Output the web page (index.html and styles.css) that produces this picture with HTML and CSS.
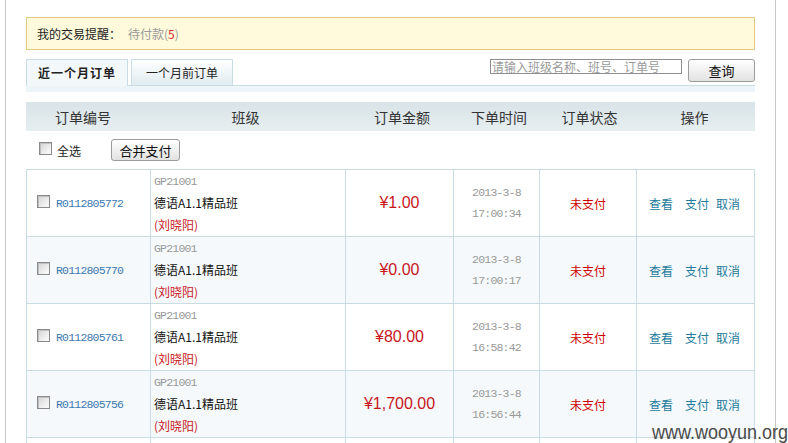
FILE: index.html
```html
<!DOCTYPE html>
<html lang="zh-CN">
<head>
    <meta charset="UTF-8">
    <title>我的订单</title>
    <link rel="stylesheet" href="styles.css">
</head>
<body>
    <div class="page">
        <div class="notice">
            <span class="notice-title">我的交易提醒：</span>
            <span class="notice-item">待付款(<em>5</em>)</span>
        </div>

        <div class="tabbar">
            <a class="tab tab-active">近一个月订单</a>
            <a class="tab">一个月前订单</a>
            <form class="search">
                <input type="text" class="search-input" placeholder="请输入班级名称、班号、订单号">
                <button type="button" class="btn btn-query">查询</button>
            </form>
        </div>
        <div class="tab-band"></div>

        <div class="list-head">
            <span>订单编号</span>
            <span>班级</span>
            <span>订单金额</span>
            <span>下单时间</span>
            <span>订单状态</span>
            <span>操作</span>
        </div>

        <div class="toolbar">
            <label class="check-all"><input type="checkbox" class="chk"> 全选</label>
            <button type="button" class="btn btn-merge">合并支付</button>
        </div>

        <div class="orders">
            <div class="order-row">
                <div class="cell cell-no"><input type="checkbox" class="chk"><a class="order-no mono">R0112805772</a></div>
                <div class="cell cell-class">
                    <span class="class-code mono">GP21001</span>
                    <span class="class-name">德语A1.1精品班</span>
                    <span class="teacher">(刘晓阳)</span>
                </div>
                <div class="cell cell-amount">¥1.00</div>
                <div class="cell cell-time mono"><span>2013-3-8</span><span>17:00:34</span></div>
                <div class="cell cell-status">未支付</div>
                <div class="cell cell-ops"><a class="op-view">查看</a><a class="op-pay">支付</a><a>取消</a></div>
            </div>
            <div class="order-row">
                <div class="cell cell-no"><input type="checkbox" class="chk"><a class="order-no mono">R0112805770</a></div>
                <div class="cell cell-class">
                    <span class="class-code mono">GP21001</span>
                    <span class="class-name">德语A1.1精品班</span>
                    <span class="teacher">(刘晓阳)</span>
                </div>
                <div class="cell cell-amount">¥0.00</div>
                <div class="cell cell-time mono"><span>2013-3-8</span><span>17:00:17</span></div>
                <div class="cell cell-status">未支付</div>
                <div class="cell cell-ops"><a class="op-view">查看</a><a class="op-pay">支付</a><a>取消</a></div>
            </div>
            <div class="order-row">
                <div class="cell cell-no"><input type="checkbox" class="chk"><a class="order-no mono">R0112805761</a></div>
                <div class="cell cell-class">
                    <span class="class-code mono">GP21001</span>
                    <span class="class-name">德语A1.1精品班</span>
                    <span class="teacher">(刘晓阳)</span>
                </div>
                <div class="cell cell-amount">¥80.00</div>
                <div class="cell cell-time mono"><span>2013-3-8</span><span>16:58:42</span></div>
                <div class="cell cell-status">未支付</div>
                <div class="cell cell-ops"><a class="op-view">查看</a><a class="op-pay">支付</a><a>取消</a></div>
            </div>
            <div class="order-row">
                <div class="cell cell-no"><input type="checkbox" class="chk"><a class="order-no mono">R0112805756</a></div>
                <div class="cell cell-class">
                    <span class="class-code mono">GP21001</span>
                    <span class="class-name">德语A1.1精品班</span>
                    <span class="teacher">(刘晓阳)</span>
                </div>
                <div class="cell cell-amount">¥1,700.00</div>
                <div class="cell cell-time mono"><span>2013-3-8</span><span>16:56:44</span></div>
                <div class="cell cell-status">未支付</div>
                <div class="cell cell-ops"><a class="op-view">查看</a><a class="op-pay">支付</a><a>取消</a></div>
            </div>
            <!-- next row, only its top edge shows in the window -->
            <div class="order-row">
                <div class="cell"></div>
                <div class="cell"></div>
                <div class="cell"></div>
                <div class="cell"></div>
                <div class="cell"></div>
                <div class="cell"></div>
            </div>
        </div>
    </div>

    <div class="watermark">www.wooyun.org</div>
</body>
</html>
```

FILE: styles.css
```css
:root {
    --line: #c9dbe3;
    --red: #c8161d;
    --link: #237a9c;
}
body {
    margin: 0;
    font-family: "Noto Sans CJK SC", sans-serif;
    font-size: 12px;
    color: #333;
    background: #fff;
}
a {
    cursor: pointer;
}
.mono {
    font-family: "Liberation Mono", monospace;
    font-size: 11.5px;
    letter-spacing: -0.8px;
}
.page {
    margin-left: 5px;
    width: 771px;
    height: 443px;
    overflow: hidden;
    padding: 17px 20px 0;
    box-sizing: border-box;
    border-left: 1px solid #c8c8c8;
    border-right: 1px solid #c8c8c8;
}

/* 交易提醒 */
.notice {
    height: 31px;
    display: flex;
    align-items: center;
    padding-left: 10px;
    border: 1px solid #e4ca7e;
    background: #fffadb;
    color: #222;
}
.notice-item {
    margin-left: 7px;
    color: #999;
}
.notice-item em {
    font-style: normal;
    color: #d42a2a;
}

/* 标签页 */
.tabbar {
    margin-top: 9px;
    height: 26px;
    display: flex;
    border-bottom: 1px solid var(--line);
}
.tab {
    width: 100px;
    height: 25px;
    line-height: 25px;
    text-align: center;
    border: 1px solid var(--line);
    border-bottom: 0;
    background: linear-gradient(#ffffff, #e1ebf0);
    color: #222;
}
.tab + .tab {
    margin-left: 3px;
}
.tab-active {
    height: 26px;
    background: #f3f8fa;
    font-weight: bold;
    letter-spacing: 1px;
}
.tab-band {
    height: 6px;
    background: #eef5f8;
}
.search {
    margin: 0 0 0 auto;
    display: flex;
    align-items: flex-start;
}
.search-input {
    width: 192px;
    height: 15px;
    padding: 0 1px;
    box-sizing: border-box;
    border: 1px solid #8e8e8e;
    font-family: inherit;
    font-size: 12px;
    line-height: 13px;
    outline: none;
}
.search-input::placeholder {
    color: #9a9a9a;
}
.btn {
    padding: 0;
    border: 1px solid #9b9b9b;
    border-radius: 3px;
    background: linear-gradient(#ffffff, #e2e2e2);
    font-family: inherit;
    font-size: 13px;
    color: #111;
    cursor: pointer;
}
.btn-query {
    width: 67px;
    height: 23px;
    margin-left: 6px;
}

/* 列表 */
.list-head {
    margin-top: 10px;
    height: 29px;
    display: grid;
    grid-template-columns: 114px 211px 102px 92px 89px 121px;
    align-items: center;
    text-align: center;
    font-size: 14px;
    background: linear-gradient(#d9e4e8, #e6eef0);
    color: #333;
}
.toolbar {
    height: 38px;
    display: flex;
    align-items: center;
    padding-left: 13px;
}
.check-all {
    display: flex;
    align-items: center;
    gap: 5px;
    font-size: 12px;
    color: #222;
}
.btn-merge {
    width: 69px;
    height: 22px;
    margin-left: 30px;
}
.chk {
    appearance: none;
    width: 13px;
    height: 13px;
    margin: 0;
    border: 1px solid #8a8a8a;
    background: linear-gradient(135deg, #d4d4d4, #f6f6f6 80%);
    box-shadow: inset 1px 1px 0 #c0c0c0;
}
.check-all .chk {
    margin-top: -3px;
}
.orders {
    border-top: 1px solid var(--line);
    border-left: 1px solid var(--line);
}
.order-row {
    display: grid;
    grid-template-columns: 124px 195px 108px 86px 97px 118px;
    height: 67px;
}
.order-row:nth-child(even) {
    background: #f5f9fb;
}
.cell {
    border-right: 1px solid var(--line);
    border-bottom: 1px solid var(--line);
    display: flex;
    align-items: center;
}
.cell-no {
    padding-left: 10px;
}
.cell-no .chk {
    margin-top: -4px;
}
.order-no {
    margin-left: 6px;
    color: #3b78b0;
}
.cell-class {
    flex-direction: column;
    align-items: flex-start;
    justify-content: center;
    padding-left: 3px;
    line-height: 21.5px;
}
.class-code {
    color: #999;
}
.class-name {
    color: #111;
}
.teacher {
    color: var(--red);
}
.cell-amount {
    justify-content: center;
    font-family: "Liberation Sans", sans-serif;
    font-size: 16px;
    color: var(--red);
}
.cell-time {
    flex-direction: column;
    justify-content: center;
    line-height: 21px;
    color: #999;
}
.cell-status {
    justify-content: center;
    color: #c00;
}
.cell-ops {
    padding-left: 12px;
    color: var(--link);
}
.op-view {
    margin-right: 12px;
}
.op-pay {
    margin-right: 7px;
}

.watermark {
    position: absolute;
    left: 652px;
    top: 422px;
    font-family: "Liberation Sans", sans-serif;
    font-size: 20px;
    line-height: 20px;
    color: #4a4a4a;
    transform: scaleX(0.9);
    transform-origin: left top;
    white-space: nowrap;
}
```
